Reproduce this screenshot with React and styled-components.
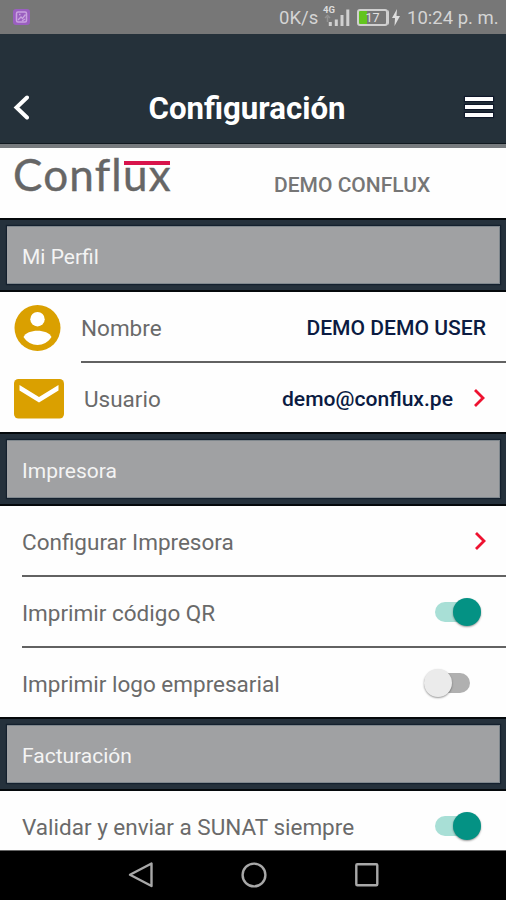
import React, { useState } from "react";
import styled, { createGlobalStyle } from "styled-components";

const App = () => {
  const [settings, setSettings] = useState({
    qr: true,
    logo: false,
    sunat: true,
  });

  const toggle = (key) => {
    setSettings({ ...settings, [key]: !settings[key] });
  };

  return (
    <Screen>
      <GlobalStyle />
      <StatusBar>
        <PhotoIcon />
        <div className="right">
          <Speed>0K/s</Speed>
          <SignalIcon />
          <Battery>
            <span>17</span>
          </Battery>
          <BoltIcon />
          <Clock>10:24 p. m.</Clock>
        </div>
      </StatusBar>

      <Header>
        <BackIcon />
        <h1>Configuración</h1>
        <MenuButton aria-label="Menú">
          <span />
          <span />
          <span />
        </MenuButton>
      </Header>

      <Content>
        <Company>
          <Logo>
            Confl<span>ux</span>
          </Logo>
          <CompanyName>DEMO CONFLUX</CompanyName>
        </Company>

        <Section title="Mi Perfil" />
        <ProfileRow>
          <UserIcon />
          <Label>Nombre</Label>
          <Value>DEMO DEMO USER</Value>
        </ProfileRow>
        <Divider $left={81} />
        <ProfileRow>
          <MailIcon />
          <Label>Usuario</Label>
          <Value $gap={20}>demo@conflux.pe</Value>
          <ChevronIcon />
        </ProfileRow>

        <Section title="Impresora" />
        <Row>
          <Label>Configurar Impresora</Label>
          <ChevronIcon />
        </Row>
        <Divider $left={22} />
        <Row>
          <Label>Imprimir código QR</Label>
          <Switch $on={settings.qr} onClick={() => toggle("qr")} />
        </Row>
        <Divider $left={22} />
        <Row>
          <Label>Imprimir logo empresarial</Label>
          <Switch $on={settings.logo} onClick={() => toggle("logo")} />
        </Row>

        <Section title="Facturación" />
        <Row>
          <Label>Validar y enviar a SUNAT siempre</Label>
          <Switch $on={settings.sunat} onClick={() => toggle("sunat")} />
        </Row>
      </Content>

      <NavBar>
        <svg width="26" height="28" viewBox="0 0 26 28">
          <path d="M23.5 2.5V25L2 13.8Z" />
        </svg>
        <svg width="28" height="28" viewBox="0 0 28 28">
          <circle cx="14" cy="14" r="11.4" />
        </svg>
        <svg width="26" height="28" viewBox="0 0 26 28">
          <rect x="2.3" y="3.3" width="21" height="21" rx="1" />
        </svg>
      </NavBar>
    </Screen>
  );
};

const Section = ({ title }) => (
  <SectionBar>
    <div>{title}</div>
  </SectionBar>
);

const PhotoIcon = () => (
  <svg width="17" height="16" viewBox="0 0 17 16">
    <rect width="17" height="16" rx="3" fill="#9a5fc0" />
    <rect x="3.5" y="3" width="10" height="10" rx="1.5" fill="none" stroke="#c9a3df" strokeWidth="1.5" />
    <path d="M5 11l3-3 1.5 1.5 3-4M6 5.5h1.5M9 12l3-2" fill="none" stroke="#c9a3df" strokeWidth="1.3" />
  </svg>
);

const SignalIcon = () => (
  <svg width="28" height="24" viewBox="0 0 28 24">
    <text x="1" y="8" fontFamily="Roboto, sans-serif" fontSize="9.5" fontWeight="700" fill="#dcdcdc">
      4G
    </text>
    <path d="M3 13l2.5-2.5L8 13M5.5 17v-5" fill="none" stroke="#929292" strokeWidth="1.5" />
    <path d="M8.3 17v4M14.3 14.5V21M20 10v11M25.800 4.500V21" fill="none" stroke="#d0d0d0" strokeWidth="3" />
  </svg>
);

const BoltIcon = () => (
  <svg width="8" height="17" viewBox="0 0 8 17">
    <path d="M5 0L0 9h3L2.5 17 8 7H4.5Z" fill="#dedede" />
  </svg>
);

const BackIcon = () => (
  <svg width="18" height="27" viewBox="0 0 18 27">
    <path d="M16 3.5L5.5 13.500 16 23.500" fill="none" stroke="#fff" strokeWidth="4" strokeLinecap="round" />
  </svg>
);

const UserIcon = () => (
  <svg width="47" height="47" viewBox="0 0 47 47">
    <circle cx="23.5" cy="23" r="23" fill="#daa000" />
    <circle cx="23.5" cy="14.2" r="7.2" fill="#fff" />
    <path d="M9.5 32C13 23.500 34 23.500 37.500 32C31 42.500 16 42.500 9.500 32Z" fill="#fff" />
  </svg>
);

const MailIcon = () => (
  <svg width="50" height="40" viewBox="0 0 50 40">
    <rect width="50" height="39.5" rx="4.5" fill="#daa000" />
    <path d="M5.5 6v5.500L25 23.500 44.500 11.500V6L25 18Z" fill="#fff" />
  </svg>
);

const ChevronIcon = () => (
  <svg width="13" height="22" viewBox="0 0 13 22">
    <path d="M2 2L10 10 2 18" fill="none" stroke="#ee1230" strokeWidth="2.8" />
  </svg>
);

const GlobalStyle = createGlobalStyle`
  * {
    box-sizing: border-box;
  }
  body {
    margin: 0;
    font-family: Roboto, sans-serif;
  }
`;

const Screen = styled.div`
  display: flex;
  flex-direction: column;
  width: 506px;
  height: 900px;
  overflow: hidden;
  background: #fefefe;
`;

const StatusBar = styled.div`
  display: flex;
  flex-shrink: 0;
  align-items: center;
  justify-content: space-between;
  height: 34px;
  padding: 0 9px 0 13px;
  background: #777777;
  color: #d4d4d4;
  .right {
    display: flex;
    align-items: center;
  }
`;

const Speed = styled.span`
  width: 43px;
  padding-top: 2px;
  font-size: 18.5px;
  white-space: nowrap;
`;

const Clock = styled.span`
  width: 90px;
  margin-left: 7px;
  padding-top: 2px;
  font-size: 18.5px;
  white-space: nowrap;
`;

const Battery = styled.div`
  display: flex;
  align-items: center;
  justify-content: center;
  width: 31px;
  height: 17px;
  margin: 0 4px 0 7px;
  border: 2px solid #d0d0d0;
  border-radius: 3px;
  background: linear-gradient(to right, #63c41f 8px, transparent 8px);
  box-shadow: 2px 0 0 -1px #d0d0d0;
  font-size: 12.5px;
  color: #e2e2e2;
`;

const Header = styled.header`
  display: flex;
  flex-shrink: 0;
  align-items: center;
  justify-content: space-between;
  height: 114px;
  padding: 36px 13px 0 11px;
  background: #25313a;
  border-bottom: 4px solid #777b7e;
  box-shadow: inset 0 -1px 0 #10191f;
  h1 {
    margin: 3px 0 0;
    font-size: 31.2px;
    line-height: 36px;
    font-weight: 700;
    color: #fff;
  }
`;

const MenuButton = styled.button`
  display: flex;
  flex-direction: column;
  gap: 4px;
  padding: 0;
  border: none;
  background: none;
  span {
    width: 28px;
    height: 4px;
    background: #fff;
    box-shadow: 0 0 1px 1px #10182a;
  }
`;

const Content = styled.main`
  flex: 1;
  min-height: 0;
  overflow: hidden;
`;

const Company = styled.div`
  display: flex;
  height: 70px;
  padding-left: 13px;
`;

const Logo = styled.div`
  width: 261px;
  font-family: Lato, sans-serif;
  font-size: 44px;
  line-height: 52px;
  letter-spacing: 1.2px;
  color: #666666;
  -webkit-text-stroke: 0.4px #666666;
  font-variant-ligatures: none;
  span {
    background: linear-gradient(#d8144c, #d8144c) 1px 13px / 46px 4px no-repeat;
  }
`;

const CompanyName = styled.div`
  padding-top: 25px;
  font-size: 21px;
  line-height: 24px;
  font-weight: 500;
  color: #767676;
`;

const SectionBar = styled.div`
  height: 74px;
  padding: 6px 6px 6px 7px;
  background: #25313c;
  border-top: 2px solid #05090c;
  border-bottom: 2px solid #05090c;
  div {
    height: 58px;
    padding-left: 15px;
    border: 1px solid #7f878d;
    border-left: none;
    background: #a0a1a3;
    box-shadow: 0 0 1px 1px #14202e;
    color: #f4f4f4;
    font-size: 21px;
    line-height: 60px;
  }
`;

const Row = styled.div`
  display: flex;
  align-items: center;
  justify-content: space-between;
  height: 69px;
  padding: 3px 19px 0 22px;
`;

const ProfileRow = styled(Row)`
  justify-content: flex-start;
  padding: 3px 20px 0 14px;
  > svg:first-child {
    margin-right: 20px;
  }
`;

const Divider = styled.div`
  height: 2px;
  margin-left: ${({ $left }) => $left}px;
  background: #626262;
`;

const Label = styled.span`
  padding-bottom: 1px;
  font-size: 22.5px;
  line-height: 28px;
  color: #6a6a6a;
  white-space: nowrap;
`;

const Value = styled.span`
  margin-left: auto;
  margin-right: ${({ $gap }) => $gap || 0}px;
  font-size: 21.1px;
  line-height: 28px;
  font-weight: 500;
  color: #0b1b42;
`;

const Switch = styled.button`
  display: flex;
  align-items: center;
  justify-content: ${({ $on }) => ($on ? "flex-end" : "flex-start")};
  width: 46px;
  height: 20px;
  padding: 0;
  margin: 0 ${({ $on }) => ($on ? 6 : 17)}px 2px 0;
  border: none;
  border-radius: 10px;
  background: ${({ $on }) => ($on ? "#a8dfd6" : "#b0b0b0")};
  &::before {
    content: "";
    width: 28px;
    height: 28px;
    flex-shrink: 0;
    border-radius: 50%;
    background: ${({ $on }) => ($on ? "#049284" : "#ebebeb")};
    box-shadow: 0 1px 2px rgba(0, 0, 0, 0.4);
  }
`;

const NavBar = styled.nav`
  display: flex;
  flex-shrink: 0;
  align-items: center;
  justify-content: center;
  gap: 86px;
  height: 50px;
  padding: 0 0 1px 1px;
  background: #000;
  border-top: 1px solid #666;
  svg {
    fill: none;
    stroke: #a8a8a8;
    stroke-width: 2.4;
    stroke-linejoin: round;
  }
`;

export default App;
